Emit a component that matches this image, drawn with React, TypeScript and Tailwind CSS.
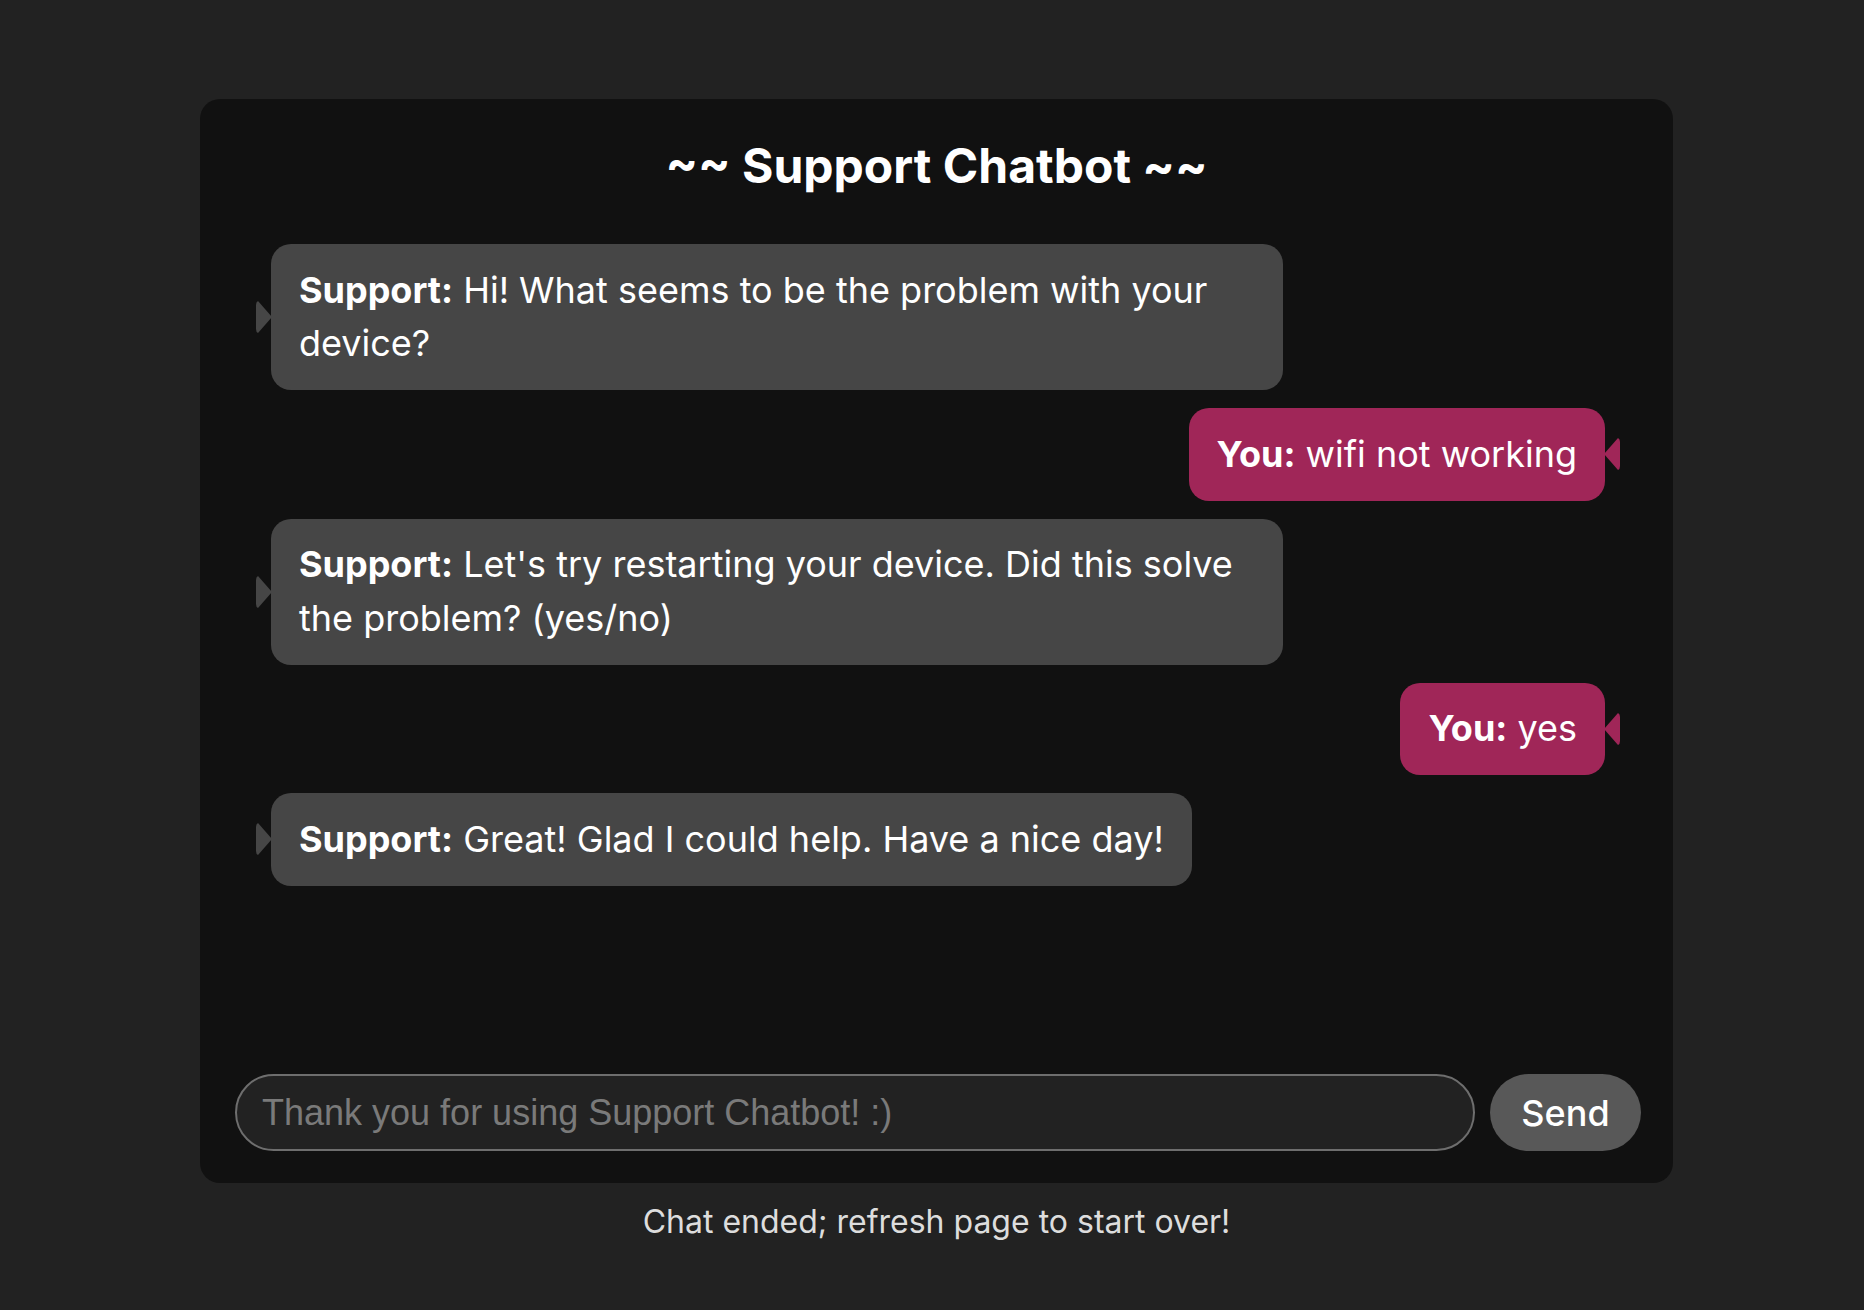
import React from 'react';

type Msg = { from: 'support' | 'you'; text: string };

const messages: Msg[] = [
  { from: 'support', text: 'Hi! What seems to be the problem with your device?' },
  { from: 'you', text: 'wifi not working' },
  { from: 'support', text: "Let's try restarting your device. Did this solve the problem? (yes/no)" },
  { from: 'you', text: 'yes' },
  { from: 'support', text: 'Great! Glad I could help. Have a nice day!' },
];

function Tail({ side, color }: { side: 'left' | 'right'; color: string }) {
  // little bow-tie tail that sits against the bubble edge
  const d =
    side === 'left'
      ? 'M2 1 L16 17 L2 33 Q0 32 0 29 L0 5 Q0 2 2 1Z'
      : 'M14 1 L0 17 L14 33 Q16 32 16 29 L16 5 Q16 2 14 1Z';
  return (
    <svg
      width="16"
      height="34"
      viewBox="0 0 16 34"
      className={side === 'left' ? 'absolute -left-[15px] top-1/2 -translate-y-1/2' : 'absolute -right-[15px] top-1/2 -translate-y-1/2'}
    >
      <path d={d} fill={color} />
    </svg>
  );
}

function Bubble({ msg }: { msg: Msg }) {
  const isYou = msg.from === 'you';
  return (
    <div className={isYou ? 'flex justify-end' : 'flex justify-start'}>
      <div
        className={
          isYou
            ? 'relative max-w-[1012px] rounded-[20px] bg-[#a02658] px-[28px] py-[19.5px] text-[36px] leading-[53.5px] text-white'
            : 'relative max-w-[1012px] rounded-[20px] bg-[#464646] px-[28px] py-[19.5px] text-[36px] leading-[53.5px] text-white'
        }
      >
        <Tail side={isYou ? 'right' : 'left'} color={isYou ? '#a02658' : '#464646'} />
        <span className="font-bold">{isYou ? 'You:' : 'Support:'}</span> {msg.text}
      </div>
    </div>
  );
}

export default function App() {
  return (
    <div className="min-h-[1310px] bg-[#222222] pt-[99px] font-['Inter',sans-serif]">
      <div className="ml-[200px] w-[1473px]">
        {/* chat panel */}
        <div className="flex h-[1084px] flex-col rounded-[20px] bg-[#111111] p-[32px]">
          <h1 className="mt-[8px] mb-[52px] text-center text-[48px] font-bold leading-[53px] text-white">
            ~~ Support Chatbot ~~
          </h1>

          <div className="flex flex-col gap-[18px] pl-[39px] pr-[36px]">
            {messages.map((m, i) => (
              <Bubble key={i} msg={m} />
            ))}
          </div>

          <div className="flex-1" />

          <div className="flex items-center gap-[15px] pl-[3px]">
            <input
              type="text"
              disabled
              placeholder="Thank you for using Support Chatbot! :)"
              className="h-[77px] flex-1 rounded-full border-2 border-[#6e6e6e] bg-[#222222] pl-[25px] font-['Liberation_Sans',Arial,sans-serif] text-[36px] text-white placeholder:text-[#7a7a7a] outline-none"
            />
            <button className="h-[77px] w-[151px] rounded-full bg-[#585858] text-[36px] font-medium text-white">
              Send
            </button>
          </div>
        </div>

        <p className="mt-[16px] text-center text-[32px] leading-[45px] text-[#dddddd]">
          Chat ended; refresh page to start over!
        </p>
      </div>
    </div>
  );
}
